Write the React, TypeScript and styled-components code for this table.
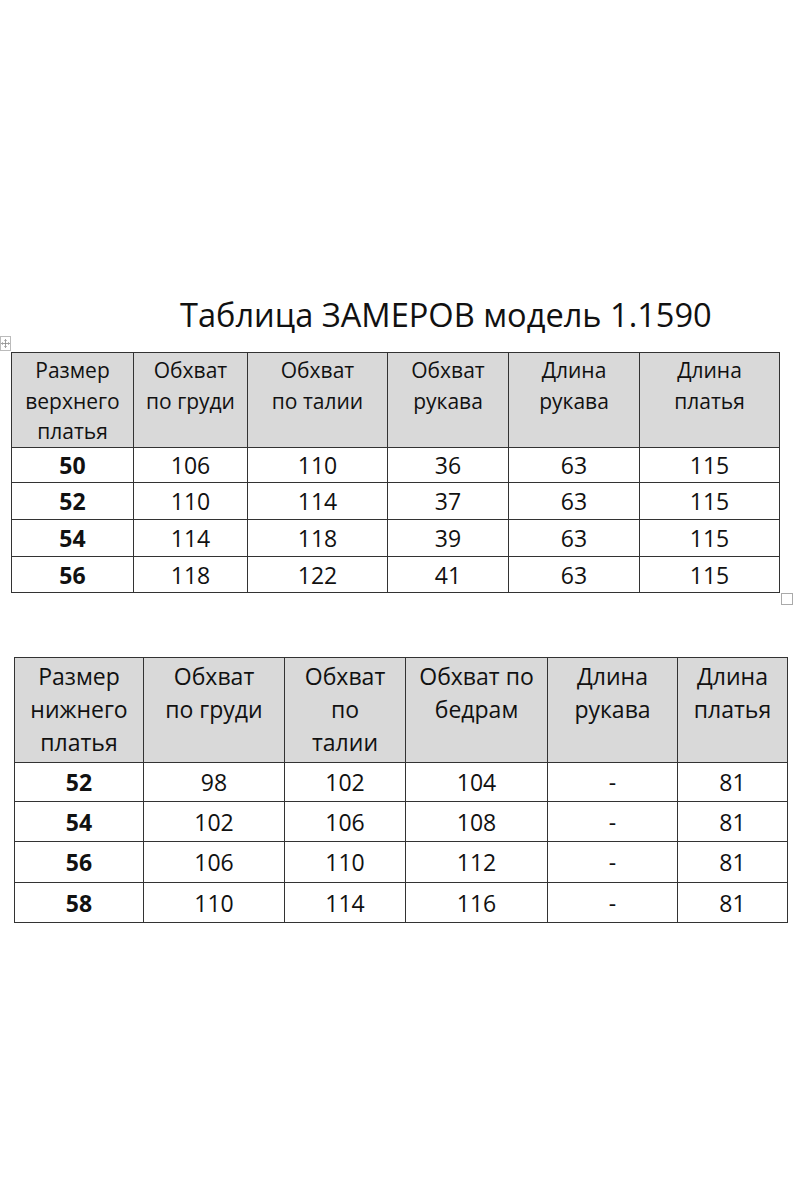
import { ReactElement } from 'react'
import styled, { createGlobalStyle } from 'styled-components'

const BORDER = '#333'
const HEAD_BG = '#d9d9d9'

const GlobalStyle = createGlobalStyle`
  html, body {
    margin: 0;
    padding: 0;
    background: #fff;
  }
  body {
    font-family: 'Open Sans', 'Noto Sans', sans-serif;
    color: #111;
  }
`

const Page = styled.div`
  width: 800px;
  height: 1200px;
  padding-top: 295px;
  box-sizing: border-box;
  display: flex;
  flex-direction: column;
`

const Title = styled.h1`
  margin: 0;
  padding-left: 180px;
  font-size: 32.6px;
  line-height: 40px;
  font-weight: 400;
  letter-spacing: 0;
`

const TableWrap = styled.div<{ $left: number; $top: number }>`
  position: relative;
  margin-left: ${(p) => p.$left}px;
  margin-top: ${(p) => p.$top}px;
  align-self: flex-start;
`

// word-style table handles, sitting over the corners
const MoveHandle = styled.div`
  position: absolute;
  left: -11px;
  top: -16px;
  width: 9px;
  height: 13px;
  border: 1px solid #bbb;
  background: #fff;
  display: flex;
  align-items: center;
  justify-content: center;
`

const ResizeHandle = styled.div`
  position: absolute;
  right: -13px;
  bottom: -12px;
  width: 10px;
  height: 10px;
  border: 1px solid #aaa;
  background: #fff;
`

const Table = styled.table`
  border-collapse: collapse;
  table-layout: fixed;
  border: 1px solid ${BORDER};
`

const Col = styled.col<{ $w: number }>`
  width: ${(p) => p.$w}px;
`

const HeadCell = styled.th<{ $size: number; $line: number; $h: number }>`
  background: ${HEAD_BG};
  border: 1px solid ${BORDER};
  height: ${(p) => p.$h}px;
  padding: 2px 2px 0;
  box-sizing: border-box;
  vertical-align: top;
  text-align: center;
  font-weight: 400;
  font-size: ${(p) => p.$size}px;
  line-height: ${(p) => p.$line}px;
  color: #111;
`

const Cell = styled.td<{ $bold?: boolean; $h: number }>`
  border: 1px solid ${BORDER};
  height: ${(p) => p.$h}px;
  padding: 0;
  box-sizing: border-box;
  text-align: center;
  vertical-align: middle;
  font-size: 23px;
  line-height: 28px;
  font-weight: ${(p) => (p.$bold ? 700 : 400)};
  color: #111;
`

type SizeTableProps = {
  widths: number[]
  heads: string[][]
  rows: string[][]
  headHeight: number
  headSize: number
  headLine: number
  rowHeights: number[]
}

const SizeTable = ({
  widths,
  heads,
  rows,
  headHeight,
  headSize,
  headLine,
  rowHeights,
}: SizeTableProps): ReactElement => (
  <Table>
    <colgroup>
      {widths.map((w, i) => (
        <Col key={i} $w={w} />
      ))}
    </colgroup>
    <thead>
      <tr>
        {heads.map((lines, i) => (
          <HeadCell key={i} $size={headSize} $line={headLine} $h={headHeight}>
            {lines.map((l, j) => (
              <span key={j}>
                {j > 0 && <br />}
                {l}
              </span>
            ))}
          </HeadCell>
        ))}
      </tr>
    </thead>
    <tbody>
      {rows.map((row, r) => (
        <tr key={r}>
          {row.map((v, c) => (
            <Cell key={c} $bold={c === 0} $h={rowHeights[r]}>
              {v}
            </Cell>
          ))}
        </tr>
      ))}
    </tbody>
  </Table>
)

const MoveIcon = () => (
  <svg width="9" height="9" viewBox="0 0 9 9">
    <path
      d="M4.5 0.5v8M0.5 4.5h8M3.3 1.7l1.2-1.2 1.2 1.2M3.3 7.3l1.2 1.2 1.2-1.2M1.7 3.3L0.5 4.5l1.2 1.2M7.3 3.3l1.2 1.2-1.2 1.2"
      stroke="#888"
      strokeWidth="0.8"
      fill="none"
    />
  </svg>
)

const upperHeads = [
  ['Размер', 'верхнего', 'платья'],
  ['Обхват', 'по груди'],
  ['Обхват', 'по талии'],
  ['Обхват', 'рукава'],
  ['Длина', 'рукава'],
  ['Длина', 'платья'],
]

const upperRows = [
  ['50', '106', '110', '36', '63', '115'],
  ['52', '110', '114', '37', '63', '115'],
  ['54', '114', '118', '39', '63', '115'],
  ['56', '118', '122', '41', '63', '115'],
]

const lowerHeads = [
  ['Размер', 'нижнего', 'платья'],
  ['Обхват', 'по груди'],
  ['Обхват', 'по', 'талии'],
  ['Обхват по', 'бедрам'],
  ['Длина', 'рукава'],
  ['Длина', 'платья'],
]

const lowerRows = [
  ['52', '98', '102', '104', '-', '81'],
  ['54', '102', '106', '108', '-', '81'],
  ['56', '106', '110', '112', '-', '81'],
  ['58', '110', '114', '116', '-', '81'],
]

export default function App(): ReactElement {
  return (
    <>
      <GlobalStyle />
      <Page>
        <Title>Таблица ЗАМЕРОВ модель 1.1590</Title>
        <TableWrap $left={11} $top={17}>
          <MoveHandle>
            <MoveIcon />
          </MoveHandle>
          <SizeTable
            widths={[122, 114, 140, 121, 131, 140]}
            heads={upperHeads}
            rows={upperRows}
            headHeight={95}
            headSize={21}
            headLine={30.5}
            rowHeights={[35, 37, 37, 36]}
          />
          <ResizeHandle />
        </TableWrap>
        <TableWrap $left={14} $top={64}>
          <SizeTable
            widths={[129, 141, 121, 142, 130, 110]}
            heads={lowerHeads}
            rows={lowerRows}
            headHeight={105}
            headSize={23}
            headLine={33}
            rowHeights={[39, 40, 41, 40]}
          />
        </TableWrap>
      </Page>
    </>
  )
}
